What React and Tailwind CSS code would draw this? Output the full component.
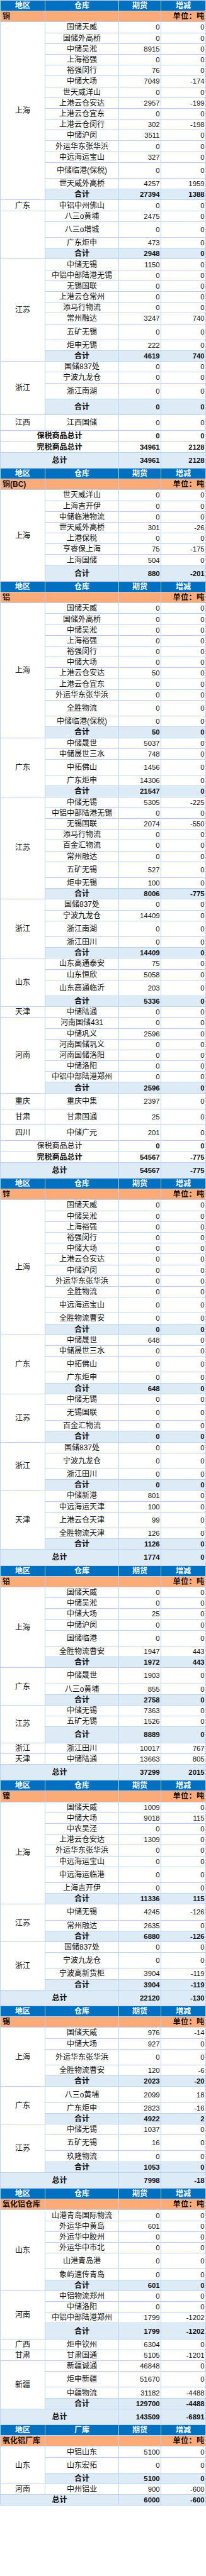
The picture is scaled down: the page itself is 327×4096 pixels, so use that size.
const t = 't';

const SECTIONS = [
  {
    title: '铜', wh: '仓库',
    groups: [
      { region: '上海', total: ['27394', '1388'], rows: [
        ['国储天威', '0', '0'],
        ['国储外高桥', '0', '0'],
        ['中储吴淞', '8915', '0'],
        ['上海裕强', '0', '0'],
        ['裕强闵行', '76', '0'],
        ['中储大场', '7049', '-174'],
        ['世天威洋山', '0', '0'],
        ['上港云仓安达', '2957', '-199'],
        ['上港云仓宜东', '0', '0'],
        ['上港云仓闵行', '302', '-198'],
        ['中储沪闵', '3511', '0'],
        ['外运华东张华浜', '0', '0'],
        ['中远海运宝山', '327', '0'],
        ['中储临港(保税)', '0', '0', t],
        ['世天威外高桥', '4257', '1959'],
      ] },
      { region: '广东', labelRows: 1, total: ['2948', '0'], rows: [
        ['中铝中州佛山', '0', '0'],
        ['八三o黄埔', '2475', '0'],
        ['八三o增城', '0', '0', t],
        ['广东炬申', '473', '0'],
      ] },
      { region: '江苏', total: ['4619', '740'], rows: [
        ['中储无锡', '1150', '0'],
        ['中铝中部陆港无锡', '0', '0'],
        ['无锡国联', '0', '0'],
        ['上港云仓常州', '0', '0'],
        ['添马行物流', '0', '0'],
        ['常州融达', '3247', '740'],
        ['五矿无锡', '0', '0', t],
        ['炬申无锡', '222', '0'],
      ] },
      { region: '浙江', total: ['0', '0', t], rows: [
        ['国储837处', '0', '0'],
        ['宁波九龙仓', '0', '0'],
        ['浙江南湖', '0', '0', t],
      ] },
      { region: '江西', rows: [['江西国储', '0', '0', t]] },
    ],
    footer: [
      { label: '保税商品总计', a: '0', b: '0', bold: true },
      { label: '完税商品总计', a: '34961', b: '2128', bold: true },
      { label: '总计', a: '34961', b: '2128', tall: true, blue: true, bold: true },
    ],
  },
  {
    title: '铜(BC)', wh: '仓库',
    groups: [
      { region: '上海', total: ['880', '-201', t], rows: [
        ['世天威洋山', '0', '0'],
        ['上海吉开伊', '0', '0'],
        ['中储临港物流', '0', '0'],
        ['世天威外高桥', '301', '-26'],
        ['上港保税', '0', '0'],
        ['亨睿保上海', '75', '-175'],
        ['上海国储', '504', '0'],
      ] },
    ],
    footer: [],
  },
  {
    title: '铝', wh: '仓库',
    groups: [
      { region: '上海', total: ['50', '0'], rows: [
        ['国储天威', '0', '0'],
        ['国储外高桥', '0', '0'],
        ['中储吴淞', '0', '0'],
        ['上海裕强', '0', '0'],
        ['裕强闵行', '0', '0'],
        ['中储大场', '0', '0'],
        ['上港云仓安达', '50', '0'],
        ['上港云仓宜东', '0', '0'],
        ['外运华东张华浜', '0', '0'],
        ['全胜物流', '0', '0', t],
        ['中储临港(保税)', '0', '0'],
      ] },
      { region: '广东', total: ['21547', '0'], rows: [
        ['中储晟世', '5037', '0'],
        ['中储晟世三水', '748', '0'],
        ['中拓佛山', '1456', '0', t],
        ['广东炬申', '14306', '0'],
      ] },
      { region: '江苏', total: ['8006', '-775'], rows: [
        ['中储无锡', '5305', '-225'],
        ['中铝中部陆港无锡', '0', '0'],
        ['无锡国联', '2074', '-550'],
        ['添马行物流', '0', '0'],
        ['百金汇物流', '0', '0'],
        ['常州融达', '0', '0'],
        ['五矿无锡', '527', '0', t],
        ['炬申无锡', '100', '0'],
      ] },
      { region: '浙江', total: ['14409', '0'], rows: [
        ['国储837处', '0', '0'],
        ['宁波九龙仓', '14409', '0'],
        ['浙江南湖', '0', '0', t],
        ['浙江田川', '0', '0'],
      ] },
      { region: '山东', total: ['5336', '0'], rows: [
        ['山东高通泰安', '75', '0'],
        ['山东恒欣', '5058', '0'],
        ['山东高通临沂', '203', '0', t],
      ] },
      { region: '天津', rows: [['中储陆通', '0', '0']] },
      { region: '河南', total: ['2596', '0'], rows: [
        ['河南国储431', '0', '0'],
        ['中储巩义', '2596', '0'],
        ['河南国储巩义', '0', '0'],
        ['河南国储洛阳', '0', '0'],
        ['中储洛阳', '0', '0'],
        ['中铝中部陆港郑州', '0', '0'],
      ] },
      { region: '重庆', rows: [['重庆中集', '2397', '0', t]] },
      { region: '甘肃', rows: [['甘肃国通', '25', '0', t]] },
      { region: '四川', rows: [['中储广元', '201', '0', t]] },
    ],
    footer: [
      { label: '保税商品总计', a: '0', b: '0' },
      { label: '完税商品总计', a: '54567', b: '-775', bold: true },
      { label: '总计', a: '54567', b: '-775', tall: true, blue: true, bold: true },
    ],
  },
  {
    title: '锌', wh: '仓库',
    groups: [
      { region: '上海', total: ['0', '0'], rows: [
        ['国储天威', '0', '0'],
        ['中储吴淞', '0', '0'],
        ['上海裕强', '0', '0'],
        ['裕强闵行', '0', '0'],
        ['中储大场', '0', '0'],
        ['上港云仓安达', '0', '0'],
        ['中储沪闵', '0', '0'],
        ['外运华东张华浜', '0', '0'],
        ['全胜物流', '0', '0'],
        ['中远海运宝山', '0', '0', t],
        ['全胜物流曹安', '0', '0'],
      ] },
      { region: '广东', total: ['648', '0'], rows: [
        ['中储晟世', '648', '0'],
        ['中储晟世三水', '0', '0'],
        ['中拓佛山', '0', '0', t],
        ['广东炬申', '0', '0'],
      ] },
      { region: '江苏', total: ['0', '0'], rows: [
        ['中储无锡', '0', '0'],
        ['无锡国联', '0', '0', t],
        ['百金汇物流', '0', '0'],
      ] },
      { region: '浙江', total: ['0', '0'], rows: [
        ['国储837处', '0', '0'],
        ['宁波九龙仓', '0', '0', t],
        ['浙江田川', '0', '0'],
      ] },
      { region: '天津', total: ['1126', '0'], rows: [
        ['中储新港', '801', '0'],
        ['中远海运天津', '100', '0'],
        ['上港云仓天津', '99', '0', t],
        ['全胜物流天津', '126', '0'],
      ] },
    ],
    footer: [{ label: '总计', a: '1774', b: '0', tall: true, blue: true, bold: true }],
  },
  {
    title: '铅', wh: '仓库',
    groups: [
      { region: '上海', total: ['1972', '443'], rows: [
        ['国储天威', '0', '0'],
        ['中储吴淞', '0', '0'],
        ['中储大场', '25', '0'],
        ['中储沪闵', '0', '0'],
        ['国储临港', '0', '0', t],
        ['全胜物流曹安', '1947', '443'],
      ] },
      { region: '广东', total: ['2758', '0'], rows: [
        ['中储晟世', '1903', '0', t],
        ['八三o黄埔', '855', '0'],
      ] },
      { region: '江苏', total: ['8889', '0', t], rows: [
        ['中储无锡', '7363', '0'],
        ['五矿无锡', '1526', '0'],
      ] },
      { region: '浙江', rows: [['浙江田川', '10017', '767']] },
      { region: '天津', rows: [['中储陆通', '13663', '805']] },
    ],
    footer: [{ label: '总计', a: '37299', b: '2015', tall: true, blue: true, bold: true }],
  },
  {
    title: '镍', wh: '仓库',
    groups: [
      { region: '上海', total: ['11336', '115'], rows: [
        ['国储天威', '1009', '0'],
        ['中储大场', '9018', '115'],
        ['中农吴泾', '0', '0'],
        ['上港云仓安达', '1309', '0'],
        ['外运华东张华浜', '0', '0'],
        ['中远海运宝山', '0', '0'],
        ['中远海运临港', '0', '0', t],
        ['上海吉开伊', '0', '0'],
      ] },
      { region: '江苏', total: ['6880', '-126'], rows: [
        ['中储无锡', '4245', '-126', t],
        ['常州融达', '2635', '0'],
      ] },
      { region: '浙江', total: ['3904', '-119'], rows: [
        ['国储837处', '0', '0'],
        ['宁波九龙仓', '0', '0', t],
        ['宁波高新货柜', '3904', '-119'],
      ] },
    ],
    footer: [{ label: '总计', a: '22120', b: '-130', tall: true, blue: true, bold: true }],
  },
  {
    title: '锡', wh: '仓库',
    groups: [
      { region: '上海', total: ['2023', '-20'], rows: [
        ['国储天威', '976', '-14'],
        ['中储大场', '927', '0'],
        ['外运华东张华浜', '0', '0', t],
        ['全胜物流曹安', '120', '-6'],
      ] },
      { region: '广东', total: ['4922', '2'], rows: [
        ['八三o黄埔', '2099', '18', t],
        ['广东炬申', '2823', '-16'],
      ] },
      { region: '江苏', total: ['1053', '0'], rows: [
        ['中储无锡', '1037', '0'],
        ['五矿无锡', '16', '0', t],
        ['玖隆物流', '0', '0'],
      ] },
    ],
    footer: [{ label: '总计', a: '7998', b: '-18', tall: true, blue: true, bold: true }],
  },
  {
    title: '氧化铝仓库', wh: '仓库',
    groups: [
      { region: '山东', total: ['601', '0'], rows: [
        ['山港青岛国际物流', '0', '0'],
        ['外运华中黄岛', '601', '0'],
        ['外运华中胶州', '0', '0'],
        ['外运华中市北', '0', '0'],
        ['山港青岛港', '0', '0', t],
        ['象屿速传青岛', '0', '0'],
      ] },
      { region: '河南', total: ['1799', '-1202', t], rows: [
        ['中铝物流郑州', '0', '0'],
        ['中储洛阳', '0', '0'],
        ['中铝中部陆港郑州', '1799', '-1202'],
      ] },
      { region: '广西', rows: [['炬申钦州', '6304', '0']] },
      { region: '甘肃', rows: [['甘肃国通', '5105', '-1201']] },
      { region: '新疆', total: ['129700', '-4488'], rows: [
        ['新疆诚通', '46848', '0'],
        ['炬申新疆', '51670', '0', t],
        ['中疆物流', '31182', '-4488'],
      ] },
    ],
    footer: [{ label: '总计', a: '143509', b: '-6891', tall: true, blue: true, bold: true }],
  },
  {
    title: '氧化铝厂库', wh: '厂库',
    groups: [
      { region: '山东', total: ['5100', '0'], rows: [
        ['中铝山东', '5100', '0'],
        ['山东宏拓', '0', '0', t],
      ] },
      { region: '河南', rows: [['中州铝业', '900', '-600']] },
    ],
    footer: [{ label: '总计', a: '6000', b: '-600', blue: true, bold: true }],
  },
];

const cjk = 'text-[12px] leading-[14px]';
const num = 'text-[11.3px] leading-[14px] text-right pr-[1.5px]';

function groupRows(g, si, gi) {
  const all = g.rows.map(r => ({ name: r[0], a: r[1], b: r[2], tall: r[3] === t }));
  if (g.total) all.push({ name: '合计', a: g.total[0], b: g.total[1], tall: g.total[2] === t, sum: true });
  const span = g.labelRows || all.length;

  return all.map((r, i) => {
    const h = r.tall ? 'h-[24.25px]' : 'h-[16.2px]';
    const bg = r.sum ? 'bg-[#ddebf7] font-bold' : 'bg-white';
    return (
      <tr key={`${si}-${gi}-${i}`}>
        {i === 0 && (
          <td rowSpan={span} className={`bg-white text-center align-middle ${cjk}`}>{g.region}</td>
        )}
        {i === span && <td rowSpan={all.length - span} className="bg-white" />}
        <td className={`${h} ${bg} text-center ${cjk}`}>{r.name}</td>
        <td className={`${bg} ${num}`}>{r.a}</td>
        <td className={`${bg} ${num}`}>{r.b}</td>
      </tr>
    );
  });
}

function Section({ s, si }) {
  return (
    <>
      <tr>
        <th className={`h-[16.2px] bg-[#0070c0] text-white font-bold text-center ${cjk}`}>地区</th>
        <th className={`bg-[#0070c0] text-white font-bold text-center ${cjk}`}>{s.wh}</th>
        <th className={`bg-[#0070c0] text-white font-bold text-center ${cjk}`}>期货</th>
        <th className={`bg-[#0070c0] text-white font-bold text-center ${cjk}`}>增减</th>
      </tr>
      <tr>
        <td className={`h-[16.2px] bg-[#fbab78] font-bold text-left pl-[3px] whitespace-nowrap ${cjk}`}>{s.title}</td>
        <td className="bg-[#fbab78]" />
        <td className="bg-[#fbab78]" />
        <td className={`bg-[#fbab78] font-bold text-right pr-[1.5px] tracking-[0.5px] ${cjk}`}>单位：吨</td>
      </tr>
      {s.groups.map((g, gi) => groupRows(g, si, gi))}
      {s.footer.map((f, fi) => {
        const h = f.tall ? 'h-[24.25px]' : 'h-[16.2px]';
        const bg = f.blue ? 'bg-[#ddebf7]' : 'bg-white';
        return (
          <tr key={`f-${si}-${fi}`}>
            <td colSpan={2} className={`${h} ${bg} text-center ${cjk} ${f.bold ? 'font-bold' : 'font-normal'}`}>{f.label}</td>
            <td className={`${bg} font-bold ${num}`}>{f.a}</td>
            <td className={`${bg} font-bold ${num}`}>{f.b}</td>
          </tr>
        );
      })}
    </>
  );
}

export default function App() {
  return (
    <div className="w-[327px] bg-white">
      <table className="w-[327px] table-fixed border-separate border-spacing-[1.5px] bg-[#bdd3ee] text-[#111] font-['Liberation_Sans','Noto_Sans_CJK_SC',sans-serif]">
        <colgroup>
          <col className="w-[70px]" />
          <col className="w-[116px]" />
          <col className="w-[66px]" />
          <col />
        </colgroup>
        <tbody>
          {SECTIONS.map((s, si) => <Section key={si} s={s} si={si} />)}
        </tbody>
      </table>
    </div>
  );
}
